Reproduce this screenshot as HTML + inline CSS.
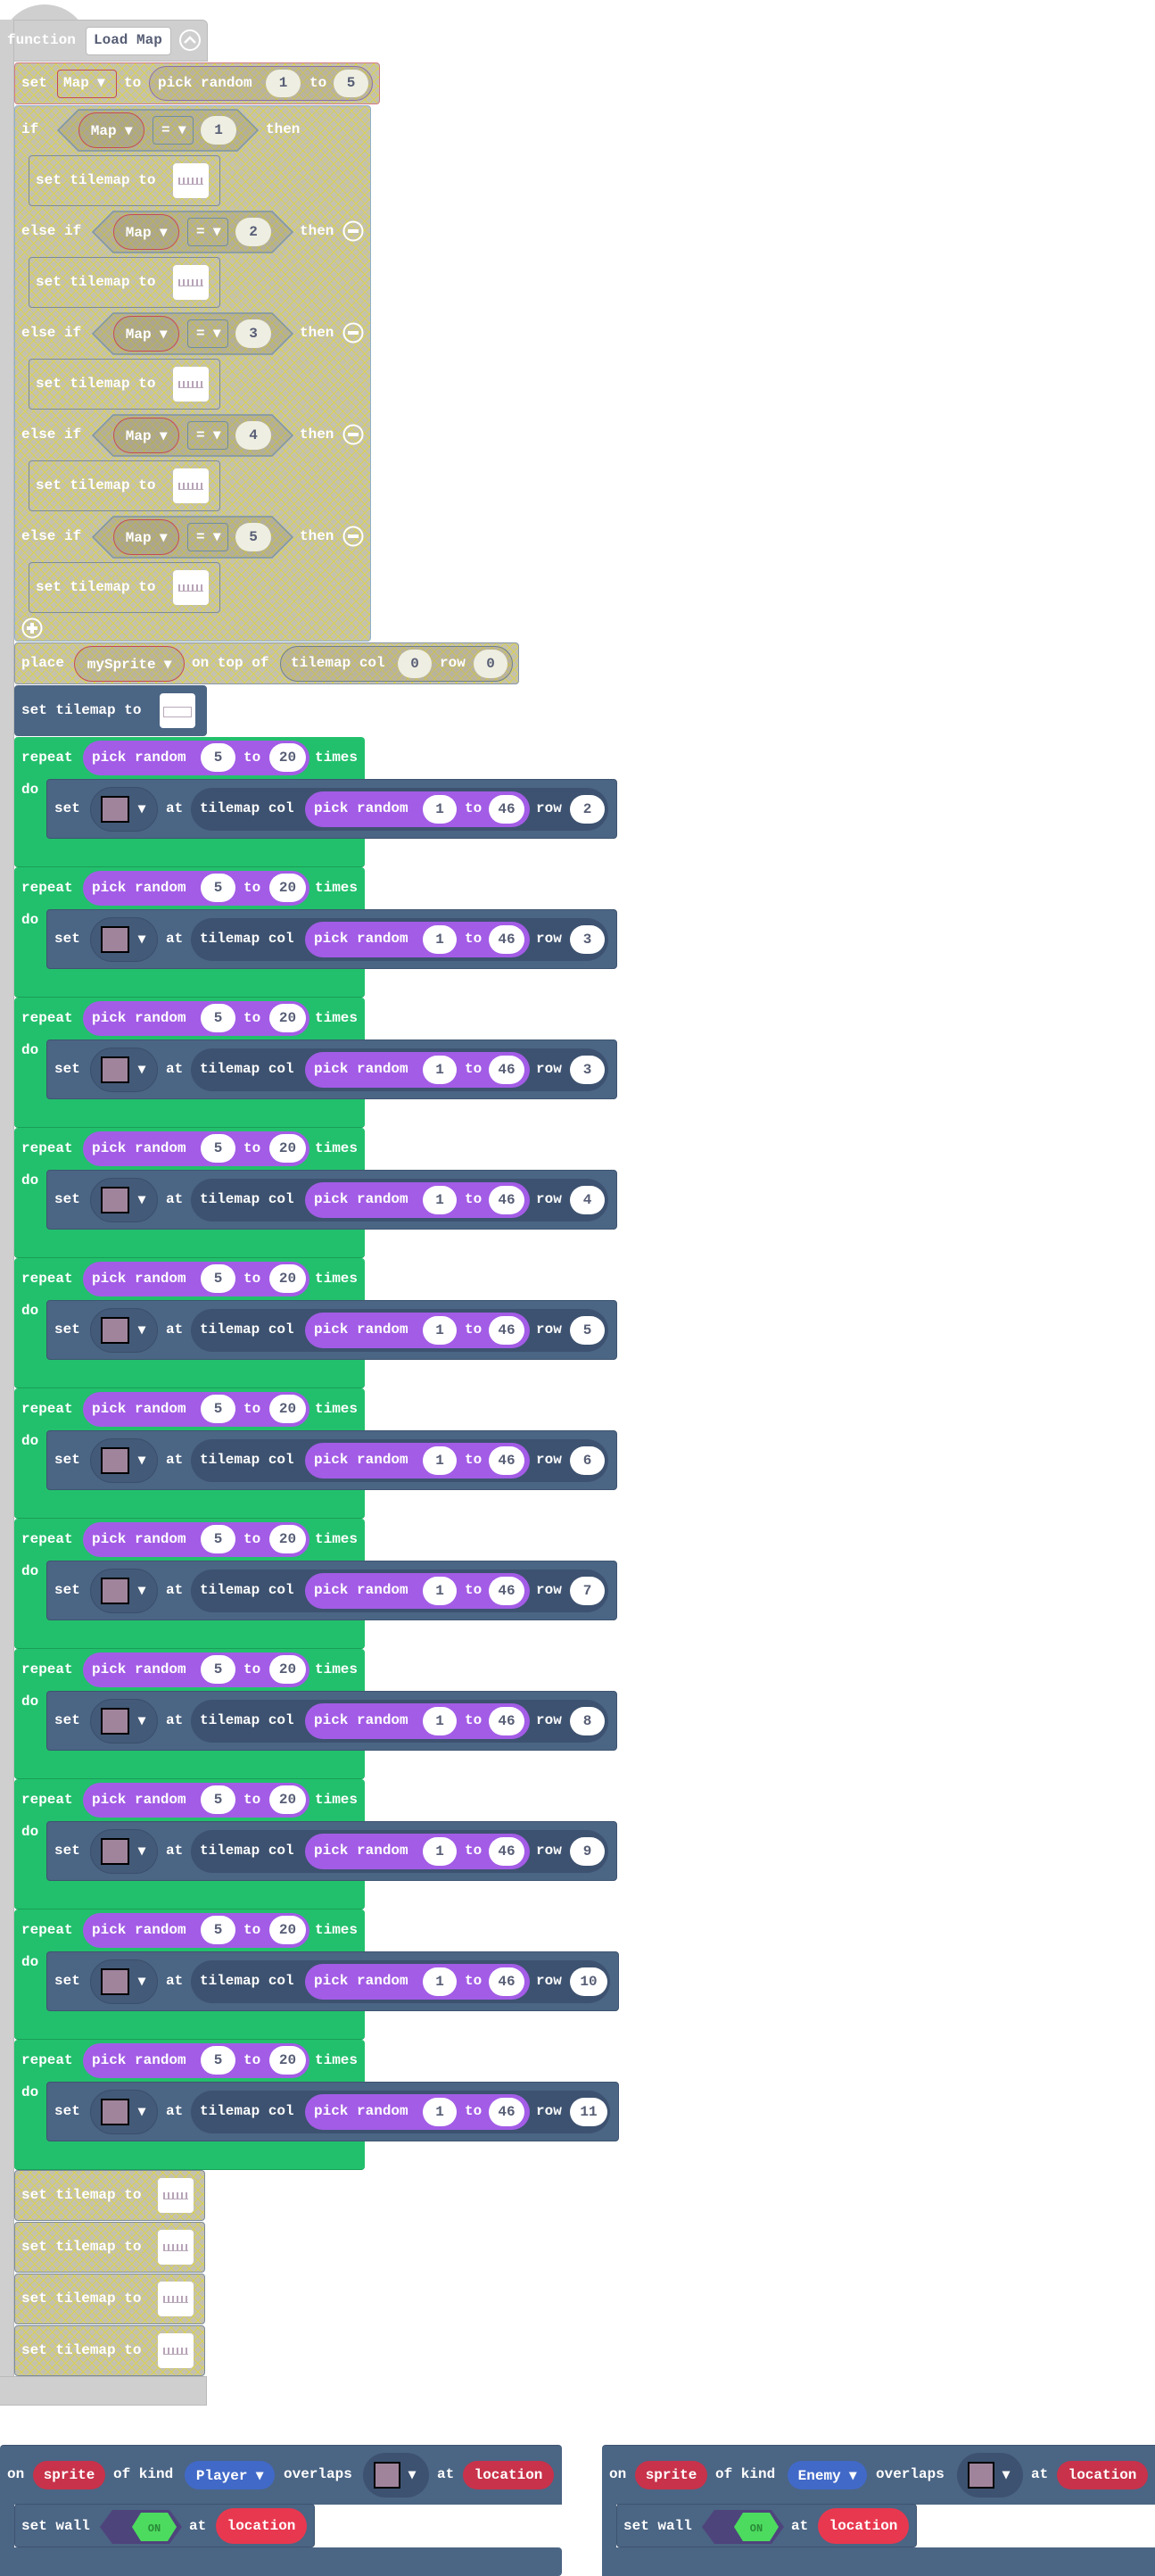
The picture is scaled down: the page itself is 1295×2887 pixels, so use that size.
<!DOCTYPE html><html><head><meta charset="utf-8"><style>
body{margin:0;width:1295px;height:2887px;background:#fff;position:relative;overflow:hidden;font-family:"Liberation Mono",monospace;font-weight:bold;font-size:16px}
.a{position:absolute;box-sizing:border-box}
.t{position:absolute;line-height:20px;height:20px;white-space:nowrap;color:#fff}
.c{display:flex;align-items:center;justify-content:center;white-space:nowrap}
.h{background-color:#c4c1ae;background-image:repeating-linear-gradient(45deg,rgba(225,215,50,.7) 0 1px,transparent 1px 7px),repeating-linear-gradient(-45deg,rgba(225,215,50,.7) 0 1px,transparent 1px 7px)}
</style></head><body><div id="r"></div>
<script>
let H='';
function b(x,y,w,h,st){H+=`<div class="a" style="left:${x}px;top:${y}px;width:${w}px;height:${h}px;${st}"></div>`}
function hb(x,y,w,h,st){H+=`<div class="a h" style="left:${x}px;top:${y}px;width:${w}px;height:${h}px;${st}"></div>`}
function t(x,y,s,c){H+=`<div class="t" style="left:${x}px;top:${y-10}px;color:${c||'#fff'}">${s}</div>`}
function o(x1,x2,yc,h,bg,s,col,st){H+=`<div class="a c" style="left:${x1}px;top:${yc-h/2}px;width:${x2-x1}px;height:${h}px;border-radius:${h/2}px;background:${bg};color:${col};${st||''}">${s}</div>`}
function img(x,y,w,h){b(x,y,w,h,'background:#fff;border-radius:4px');b(x+6,y+h/2-4,w-12,8,'border-bottom:1px solid #b9a9b9;background:repeating-linear-gradient(90deg,#b8a4b8 0 2px,#fff 2px 5px)')}
b(0,5,100,60,'background:#cfcfcf;border-radius:50px 50px 0 0');
b(0,22,233,47,'background:#cfcfcf;border-radius:0 6px 0 0;border:1px solid #bbb;border-left:0');
b(0,22,16,2674,'background:#cfcfcf;border-right:1px solid #bbb');
b(0,2663,232,33,'background:#cfcfcf;border:1px solid #bbb;border-left:0');
t(8,45,'function');
b(96,30,96,32,'background:#fff;border:1px solid #bbb;border-radius:4px');t(105,45,'Load Map','#575e75');
H+=`<svg class="a" style="left:200px;top:32px" width="26" height="26"><circle cx="13" cy="13" r="11" fill="none" stroke="#fff" stroke-width="2"/><path d="M7 16 L13 10 L19 16" fill="none" stroke="#fff" stroke-width="2.5"/></svg>`;
hb(16,70,410,47,'border:1.5px solid #d27a85;border-radius:4px');
t(24,93,'set');
b(64,78,67,32,'border:1.5px solid #c74a55;border-radius:4px');t(71,93,'Map ▾');
t(139,93,'to');
o(167,418,93,39,'rgba(150,140,120,.25)','','',';border:1.5px solid #8d6fa8');
t(177,93,'pick random');
o(298,337,93,31,'#eeeee2','1','#575e75');t(347,93,'to');o(374,413,93,31,'#eeeee2','5','#575e75');
hb(16,118,400,601,'border:1.5px solid #8fb0c8;border-radius:4px');
function cond(x,yc,n){
 H+=`<svg class="a" style="left:${x}px;top:${yc-24}px" width="226" height="48"><polygon points="1,24 24,1 202,1 225,24 202,47 24,47" fill="rgba(120,115,90,.22)" stroke="#7b94a8" stroke-width="1.5"/></svg>`;
 o(x+24,x+98,yc,40,'rgba(150,140,110,.25)','Map ▾','#fff','border:1.5px solid #c74a55');
 b(x+107,yc-16,46,32,'border:1.5px solid #6f8da0;border-radius:4px');t(x+117,yc,'= ▾');
 o(x+161,x+201,yc,32,'#eeeee2',n,'#575e75');
}
t(24,145,'if');cond(64,146,'1');t(298,145,'then');
function st(y){hb(32,y,215,57,'border:1.5px solid #7b8b9b;border-radius:4px');t(40,y+28,'set tilemap to');img(194,y+9,40,39);}
st(174);
for(let k=0;k<4;k++){let y=232+114*k;
 t(24,y+27,'else if');cond(103,y+28,String(k+2));t(336,y+27,'then');
 H+=`<svg class="a" style="left:383px;top:${y+14}px" width="26" height="26"><circle cx="13" cy="13" r="10.5" fill="none" stroke="#fff" stroke-width="2"/><rect x="7" y="11" width="12" height="4" fill="#fff"/></svg>`;
 st(y+56);}
H+=`<svg class="a" style="left:23px;top:691px" width="26" height="26"><circle cx="13" cy="13" r="10.5" fill="none" stroke="#fff" stroke-width="2"/><rect x="7" y="11" width="12" height="4" fill="#fff"/><rect x="11" y="7" width="4" height="12" fill="#fff"/></svg>`;
hb(16,720,566,47,'border:1.5px solid #8a97a6;border-radius:4px');
t(24,743,'place');o(83,207,744,40,'rgba(150,140,110,.25)','mySprite ▾','#fff','border:1.5px solid #c74a55');
t(215,743,'on top of');o(314,575,744,40,'rgba(150,140,110,.25)','','','border:1.5px solid #6f7f8f');
t(326,743,'tilemap col');o(446,484,744,32,'#eeeee2','0','#575e75');t(493,743,'row');o(531,569,744,32,'#eeeee2','0','#575e75');
b(16,768,216,57,'background:#4b6584;border-radius:4px');t(24,796,'set tilemap to');
b(179,777,40,39,'background:#fff;border-radius:4px');b(183,792,32,12,'border:1px solid #b9a9b9');
const rows=['2','3','3','4','5','6','7','8','9','10','11'];
rows.forEach((r,i)=>{let y=826+146*i;
 b(16,y,393,146,'background:#22c06c;border-radius:4px;border-bottom:1px solid #1a9e58');
 t(24,y+23,'repeat');o(93,347,y+23,39,'#a35ce6','','');t(103,y+23,'pick random');
 o(225,264,y+23,32,'#fff','5','#575e75');t(273,y+23,'to');o(302,343,y+23,32,'#fff','20','#575e75');t(353,y+23,'times');
 t(24,y+59,'do');
 let w=(r.length>1)?642:640;
 b(52,y+47,w,67,'background:#4b6584;border-radius:4px;border:1px solid #3e5470');
 t(61,y+80,'set');o(101,177,y+81,50,'#435a78','','','border:1px solid #3a4f6b');
 b(113,y+66,32,30,'background:#a0849c;border:2.5px solid #000');t(155,y+81,'▾');
 t(186,y+80,'at');o(214,52+w-10,y+81,48,'#3d5270','','');t(224,y+80,'tilemap col');
 o(342,594,y+81,40,'#a35ce6','','');t(352,y+80,'pick random');
 o(474,512,y+81,32,'#fff','1','#575e75');t(521,y+80,'to');o(548,588,y+81,32,'#fff','46','#575e75');
 t(601,y+80,'row');o(639,639+(r.length>1?42:39),y+81,32,'#fff',r,'#575e75');
});
for(let k=0;k<4;k++){let y=2432+58*k;hb(16,y,214,57,'border:1.5px solid #7b8b9b;border-radius:4px');t(24,y+28,'set tilemap to');img(177,y+9,40,39);}
function ev(x,kind,kx1,kx2,ox,dx){
 b(x,2740,630,67,'background:#4b6584;border-radius:4px 4px 0 0;border-top:1px solid #3e5470');
 b(x,2806,16,50,'background:#4b6584');
 b(x,2855,630,32,'background:#4b6584;border-radius:0 4px 4px 0');
 t(x+8,2773,'on');o(x+37,x+118,2774,32,'#c8324a','sprite','#fff');
 t(x+127,2773,'of kind');o(x+kx1,x+kx2,2774,32,'#4169c8',kind+' ▾','#fff');
 t(x+ox,2773,'overlaps');o(x+dx,x+dx+74,2774,50,'#3d5270','','');
 b(x+dx+12,2759,30,30,'background:#a0849c;border:2.5px solid #000');t(x+dx+51,2774,'▾');
 t(x+dx+83,2773,'at');o(x+dx+112,x+dx+214,2774,32,'#c8324a','location','#fff');
 b(x+16,2806,337,49,'background:#4b6584;border-radius:4px;border:1px solid #3e5470');
 t(x+24,2831,'set wall');
 H+=`<svg class="a" style="left:${x+112}px;top:2812px" width="92" height="40"><polygon points="0,20 14,1 78,1 92,20 78,39 14,39" fill="#4e447c"/><polygon points="36,20 46,4 76,4 86,20 76,36 46,36" fill="#4cdb5e"/><text x="61" y="25" font-family="Liberation Mono" font-size="12" fill="#2a8a38" text-anchor="middle">ON</text></svg>`;
 t(x+212,2831,'at');o(x+242,x+344,2831,40,'#e8384f','location','#fff');
}
ev(0,'Player',207,308,318,407);ev(675,'Enemy',208,297,307,398);
document.getElementById('r').innerHTML=H;
</script></body></html>
